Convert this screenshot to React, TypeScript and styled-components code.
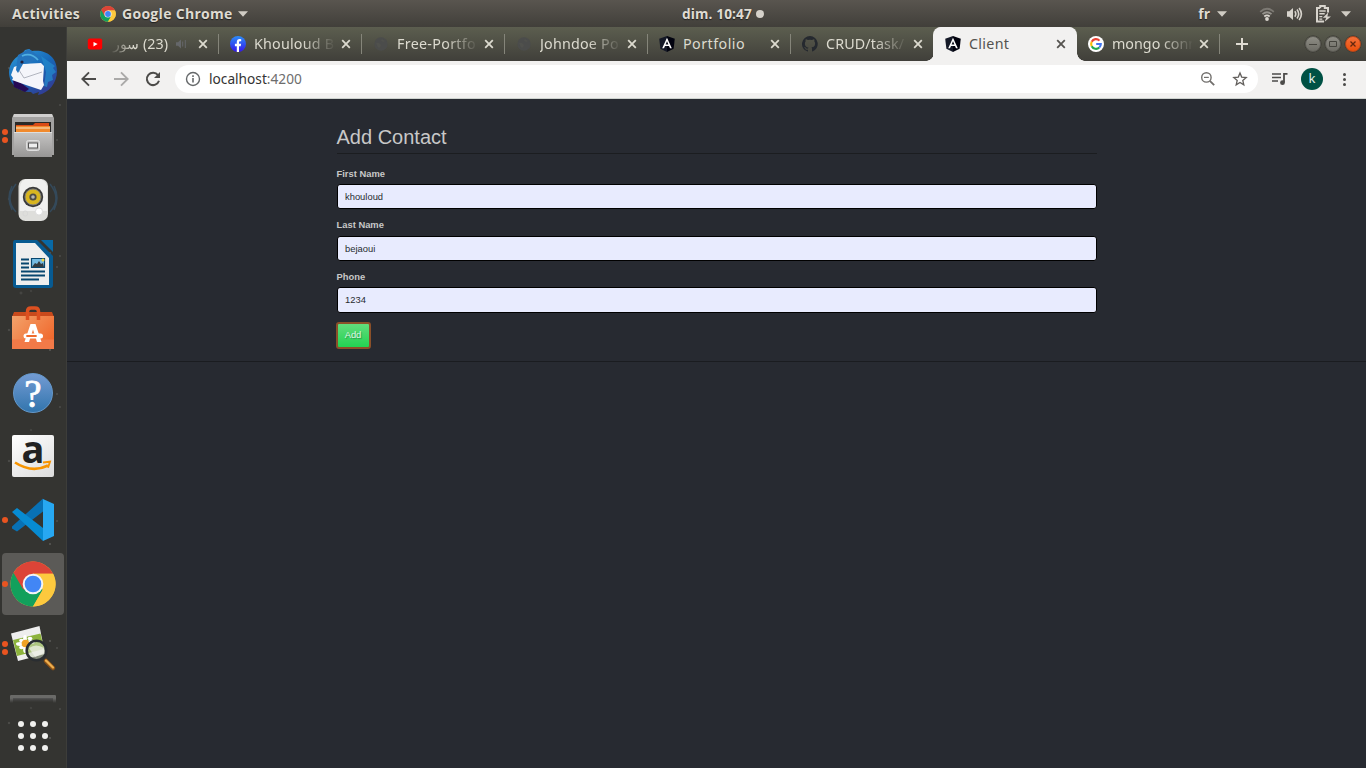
import React from "react";
import styled, { createGlobalStyle, css } from "styled-components";

const GlobalStyle = createGlobalStyle`
  * { box-sizing: border-box; }
  html, body { margin: 0; padding: 0; overflow: hidden; }
  body { width: 1366px; height: 768px; background: #272a31; font-family: "Noto Sans", "Open Sans", sans-serif; }
  svg { display: block; flex: none; }
`;

const Desktop = styled.div`
  width: 1366px;
  height: 768px;
  display: flex;
  flex-direction: column;
  overflow: hidden;
`;

/* ---------- top panel ---------- */

const TopPanel = styled.header`
  height: 27px;
  flex: none;
  display: grid;
  grid-template-columns: 682px auto 1fr;
  align-items: center;
  background: linear-gradient(#59554f, #413f3a);
  color: #dfdbd2;
  font-weight: 700;
  font-family: "Open Sans", sans-serif;
  font-size: 14px;
  line-height: 26px;
  text-shadow: 0 1px 1px rgba(0, 0, 0, 0.55);
`;

const PanelGroup = styled.div<{ $end?: boolean }>`
  display: flex;
  align-items: center;
  ${(p) => (p.$end ? css`justify-content: flex-end; padding-right: 15px;` : css`padding-left: 12px;`)}
`;

const PanelText = styled.span<{ $width?: number; $spacing?: number }>`
  white-space: nowrap;
  letter-spacing: ${(p) => p.$spacing ?? 0}px;
  ${(p) => p.$width && css`width: ${p.$width}px;`}
`;

const PanelIcon = styled.span<{ $gap: number }>`
  display: block;
  margin-left: ${(p) => p.$gap}px;
`;

const Clock = styled.div`
  display: flex;
  align-items: center;
  gap: 4px;
  width: 82px;
  letter-spacing: 0.1px;
  white-space: nowrap;
  font-size: 13.7px;
`;

const ClockDot = styled.i`
  width: 8px;
  height: 8px;
  flex: none;
  border-radius: 50%;
  background: #d5d1ca;
`;

/* ---------- dock ---------- */

const Workspace = styled.div`
  flex: 1;
  min-height: 0;
  display: flex;
`;

const Dock = styled.nav`
  width: 67px;
  flex: none;
  display: flex;
  flex-direction: column;
  gap: 2px;
  padding: 14px 0 0 2px;
  background-color: #343431;
  background-image:
    radial-gradient(circle at 50px 32px, #50504d 0 0.7px, transparent 1.4px),
    radial-gradient(circle at 9px 41px, #4a4a47 0 0.9px, transparent 1.6px),
    radial-gradient(circle at 60px 78px, #484845 0 0.6px, transparent 1.4px),
    radial-gradient(circle at 21px 93px, #454542 0 1px, transparent 1.8px),
    radial-gradient(circle at 57px 113px, #4b4b48 0 0.6px, transparent 1.2px),
    radial-gradient(circle at 31px 125px, #42423f 0 0.8px, transparent 1.6px);
  background-size: 67px 97px, 67px 131px, 67px 151px, 67px 173px, 67px 127px, 67px 139px;
  box-shadow: inset -1px 0 #3d3d3a;
`;

const DockItem = styled.div<{ $active?: boolean }>`
  width: 62px;
  height: 62px;
  flex: none;
  position: relative;
  display: flex;
  align-items: center;
  justify-content: center;
  border-radius: 4px;
  background: ${(p) => (p.$active ? "#5b5a57" : "transparent")};
`;

const RunningDots = styled.div`
  position: absolute;
  left: 0;
  top: 0;
  bottom: 0;
  display: flex;
  flex-direction: column;
  justify-content: center;
  gap: 2.5px;
`;

const RunningDot = styled.i`
  width: 6px;
  height: 6px;
  border-radius: 50%;
  background: #e95420;
`;

const DriveEdge = styled.div`
  width: 46px;
  height: 8px;
  flex: none;
  margin: 14px 0 0 8px;
  border: 3px solid #6a6a68;
  border-bottom: 0;
  border-radius: 1px 1px 0 0;
  background: linear-gradient(#555, #3a3a38);
  mask-image: linear-gradient(#000 40%, transparent);
`;

const AppGrid = styled.div`
  display: grid;
  grid-template-columns: repeat(3, 6px);
  gap: 6px;
  justify-content: center;
  width: 62px;
  margin-top: 16px;
`;

const AppDot = styled.i`
  width: 6px;
  height: 6px;
  border-radius: 50%;
  background: #f0f0ee;
`;

/* ---------- browser ---------- */

const Browser = styled.main`
  flex: 1;
  min-width: 0;
  display: flex;
  flex-direction: column;
`;

const TabStrip = styled.div`
  height: 34px;
  flex: none;
  display: flex;
  align-items: stretch;
  padding-left: 9px;
  background: linear-gradient(#5c5e4f, #403f3a);
`;

const TabBox = styled.div<{ $active?: boolean }>`
  width: 143px;
  flex: none;
  position: relative;
  display: flex;
  align-items: center;
  padding: 0 10px 0 11px;
  color: ${(p) => (p.$active ? "#55534f" : "#dcdacf")};
  ${(p) =>
    p.$active &&
    css`
      background: #f2f1f0;
      border-radius: 8px 8px 0 0;
      box-shadow: -1px 0 #f2f1f0;
      &::before,
      &::after {
        content: "";
        position: absolute;
        bottom: 0;
        width: 8px;
        height: 8px;
      }
      &::before { left: -8px; background: radial-gradient(circle at 0 0, transparent 7.5px, #f2f1f0 8px); }
      &::after { right: -8px; background: radial-gradient(circle at 100% 0, transparent 7.5px, #f2f1f0 8px); }
    `}
`;

const TabDivider = styled.i`
  position: absolute;
  right: 0;
  top: 7px;
  width: 1px;
  height: 20px;
  background: #85857a;
`;

const TabTitle = styled.span<{ $rtl?: boolean; $width: number; $spacing: number; $fade?: boolean }>`
  width: ${(p) => p.$width}px;
  flex: none;
  margin-left: 8px;
  overflow: hidden;
  white-space: nowrap;
  font-size: 14.3px;
  line-height: 20px;
  letter-spacing: ${(p) => p.$spacing}px;
  direction: ${(p) => (p.$rtl ? "rtl" : "ltr")};
  ${(p) =>
    p.$fade &&
    css`mask-image: linear-gradient(to ${p.$rtl ? "left" : "right"}, #000 60%, transparent 102%);`}
`;

const TabClose = styled.span`
  margin-left: auto;
  margin-right: 1px;
`;

const NewTab = styled.span`
  display: flex;
  align-items: center;
  margin-left: 16px;
`;

const WindowButtons = styled.div`
  display: flex;
  align-items: center;
  gap: 4px;
  margin-left: auto;
  padding-right: 5px;
`;

const WindowButton = styled.span<{ $close?: boolean }>`
  width: 16px;
  height: 16px;
  border-radius: 50%;
  border: 1px solid ${(p) => (p.$close ? "#b5461a" : "#5c5b55")};
  background: ${(p) => (p.$close ? "linear-gradient(#f4703a, #ea500c)" : "linear-gradient(#8e8d85, #6e6d66)")};
  box-shadow: 0 0 0 0.5px #36352f;
`;

const Toolbar = styled.div`
  height: 38px;
  flex: none;
  display: flex;
  align-items: center;
  padding: 0 13px 2px 14px;
  background: #f2f1f0;
  border-bottom: 1px solid #ced3cf;
`;

const NavButtons = styled.div`
  display: flex;
  gap: 16px;
  width: 94px;
`;

const AddressBar = styled.div`
  width: 1083px;
  flex: none;
  height: 28px;
  display: flex;
  align-items: center;
  padding: 0 10px;
  border-radius: 14px;
  background: #fff;
`;

const Url = styled.span`
  flex: 1;
  margin-left: 8px;
  font-size: 13.7px;
  line-height: 20px;
  color: #333;
`;

const Port = styled.span`
  color: #6d6d6d;
`;

const BarIcons = styled.div`
  display: flex;
  gap: 16px;
`;

const MenuIcons = styled.div`
  display: flex;
  align-items: center;
  margin-left: 13px;
`;

const Avatar = styled.span`
  width: 22px;
  height: 22px;
  flex: none;
  margin: 0 13px;
  border-radius: 50%;
  background: #005144;
  color: #e3efec;
  font-size: 13px;
  line-height: 21px;
  text-align: center;
`;

/* ---------- page ---------- */

const Page = styled.section`
  flex: 1;
  background: #272a31;
  font-family: "Liberation Sans", Arial, sans-serif;
  color: #c8c8c8;
`;

const FormSection = styled.div`
  height: 263px;
  border-bottom: 1px solid #1a1c20;
`;

const Form = styled.form`
  width: 760px;
  margin: 0 auto;
  padding-top: 24px;
`;

const Legend = styled.h1`
  height: 31px;
  margin: 0 0 12.8px;
  border-bottom: 1px solid #1b1d20;
  font-size: 20px;
  font-weight: 400;
  line-height: 29px;
`;

const Field = styled.label`
  display: block;
  height: 51.6px;
`;

const FieldName = styled.span`
  display: block;
  height: 17.2px;
  font-size: 9.4px;
  font-weight: 700;
  line-height: 13px;
`;

const FieldInput = styled.input`
  display: block;
  width: 100%;
  height: 25.4px;
  padding: 0 7.5px 0.5px;
  border: 1px solid #000;
  border-radius: 3px;
  outline: 0;
  background: #e8ebfe;
  color: #272b30;
  font-family: inherit;
  font-size: 9.4px;
`;

const AddButton = styled.button`
  display: block;
  width: 35px;
  height: 27px;
  margin: 0 0 0 -1px;
  padding: 0 0 2px;
  border: 2px solid #8b5029;
  border-radius: 3px;
  background: linear-gradient(#62dc7c, #22d352);
  color: #dff7e5;
  font-family: inherit;
  font-size: 9.4px;
  text-shadow: 1px 1px 1px rgba(0, 0, 0, 0.3);
`;

/* ---------- drawings ---------- */

const Chrome = ({ size }: { size: number }) => (
  <svg width={size} height={size} viewBox="0 0 48 48">
    <circle cx="24" cy="24" r="23.5" fill="#fdc93e" />
    <path d="M24 24 3.6 12.3A23.5 23.5 0 0 0 24 47.5L34.5 29.5z" fill="#12a05c" />
    <path d="M3.6 12.3A23.5 23.5 0 0 1 45.1 13.4L24 13.4 14 30z" fill="#dc4437" />
    <path d="M45.1 13.4H24v10.6l10.2 5.9L24 47.5A23.5 23.5 0 0 0 45.1 13.4z" fill="#fdc93e" />
    <circle cx="24" cy="24" r="10.8" fill="#f4f4f4" />
    <circle cx="24" cy="24" r="8.7" fill="#4286f5" />
  </svg>
);

const Caret = () => (
  <svg width="10" height="6" viewBox="0 0 10 6">
    <path d="M0 .3h10L5 5.7z" fill="#d0ccc4" />
  </svg>
);

const Wifi = () => (
  <svg width="16" height="16" viewBox="0 0 16 16" fill="none" strokeWidth="1.8">
    <path d="M1.2 5.8Q8 -.2 14.8 5.8" stroke="#7c7973" />
    <path d="M3.5 8.2Q8 4.2 12.5 8.2" stroke="#96938d" />
    <path d="M5.3 10.5Q8 8.2 10.7 10.5" stroke="#dad6cf" />
    <circle cx="8" cy="13" r="1.9" fill="#dad6cf" />
  </svg>
);

const Volume = () => (
  <svg width="17" height="16" viewBox="0 0 17 16" fill="none" stroke="#d8d4cd" strokeWidth="1.6">
    <path d="M1 5.3h2.3L7 2v12l-3.7-3.3H1z" fill="#d8d4cd" stroke="none" />
    <path d="M8.8 5.3q2 2.7 0 5.4M11 3.5q3.4 4.5 0 9M13.1 1.9q4.6 6.1 0 12.2" />
  </svg>
);

const Battery = () => (
  <svg width="16" height="18" viewBox="0 0 16 18">
    <path d="M4.2 3V1h4.6v2H12v4.5M8 16.5H1V3h3.2" fill="none" stroke="#d8d4cd" strokeWidth="2" />
    <path d="M3.3 6h6.4M3.3 8.8h5.4M3.3 11.6h3M3.3 14.1h3" stroke="#d8d4cd" strokeWidth="1.4" />
    <path d="M12.3 7.4 6.8 12.7h3.4l-1.6 4 6.4-5.2h-3.6z" fill="#d8d4cd" />
  </svg>
);

const Cross = ({ color }: { color: string }) => (
  <svg width="10" height="10" viewBox="0 0 10 10">
    <path d="m1.2 1.2 7.6 7.6m0-7.6-7.6 7.6" stroke={color} strokeWidth="1.8" />
  </svg>
);

const YouTube = () => (
  <svg width="16" height="16" viewBox="0 0 16 16">
    <rect x=".8" y="2.5" width="14.4" height="11" rx="2" fill="#f00" />
    <path d="m6.5 5.9 4.1 2.2-4.1 2.3z" fill="#fff" />
  </svg>
);

const Facebook = () => (
  <svg width="16" height="16" viewBox="0 0 16 16">
    <defs>
      <linearGradient id="fb" x1="0" y1="0" x2="0" y2="1">
        <stop offset="0" stopColor="#2c8df8" />
        <stop offset="1" stopColor="#3516e8" />
      </linearGradient>
    </defs>
    <circle cx="8" cy="8" r="8" fill="url(#fb)" />
    <path d="M6.8 16v-5.8H4.9V7.8h1.9V6.1c0-2 1.1-3 2.8-3l1.6.1v2h-.9c-1 0-1.3.5-1.3 1.2v1.4h2.1l-.4 2.4H9V16z" fill="#fff" />
  </svg>
);

const Globe = () => (
  <svg width="16" height="16" viewBox="0 0 16 16">
    <circle cx="8" cy="8" r="6.7" fill="#4b4c4b" />
    <path d="M3 7q3-1 4 1l1 1-1 2.5-2 0zM9 3l-1 1.5 2 1.5 2-1z" fill="#50514d" />
  </svg>
);

const Angular = () => (
  <svg width="16" height="16" viewBox="0 0 16 16">
    <path d="M8 0 .2 2.7l1.2 10L8 16z" fill="#151927" />
    <path d="m8 0 7.8 2.7-1.2 10L8 16z" fill="#02030f" />
    <path d="m8 1.8-4.8 10.5H5l1-2.4h4l1 2.4h1.8zm0 3.5 1.4 3.2H6.6z" fill="#fff" />
  </svg>
);

const GitHub = () => (
  <svg width="16" height="16" viewBox="0 0 16 16">
    <path
      fill="#25292f"
      d="M8 0a8 8 0 0 0-2.5 15.6c.4.1.5-.2.5-.4v-1.5c-2 .4-2.5-.5-2.7-1-.1-.2-.5-1-.8-1.1-.3-.2-.7-.6 0-.6s1.1.6 1.2.8c.7 1.2 1.9.9 2.3.7.1-.5.3-.9.5-1.1-1.8-.2-3.6-.9-3.6-4 0-.9.3-1.6.8-2.1-.1-.2-.4-1 .1-2.100 0 0 .7-.2 2.200.8a7.600 7.600 0 0 1 4 0c1.500-1 2.200-.8 2.200-.8.4 1.100.2 1.900.1 2.100.5.6.8 1.300.8 2.100 0 3.100-1.900 3.700-3.600 4 .3.2.5.7.5 1.500v2.200c0 .2.1.5.5.4A8 8 0 0 0 8 0z"
    />
  </svg>
);

const Google = () => (
  <svg width="16" height="16" viewBox="0 0 16 16">
    <circle cx="8" cy="8" r="8" fill="#fff" />
    <g fill="none" strokeWidth="2.1">
      <path d="M11.5 4.6A4.8 4.8 0 0 0 3.7 5.8" stroke="#ea4335" />
      <path d="M3.7 5.8a4.8 4.8 0 0 0 0 4.4" stroke="#fbbc05" />
      <path d="M3.7 10.2a4.8 4.8 0 0 0 7.6 1.3" stroke="#22a84d" />
      <path d="M11.3 11.5A4.8 4.8 0 0 0 12.8 8H8.2" stroke="#4276f0" />
    </g>
  </svg>
);

const Muted = () => (
  <svg width="11" height="10" viewBox="0 0 11 10">
    <path d="M0 3.2h2L5 .5v9L2 6.800H0z" fill="#65676a" />
    <path d="M6.7 2.5v5M9.3 1v8" stroke="#65676a" strokeWidth="1" />
  </svg>
);

const Thunderbird = () => (
  <svg width="50" height="52" viewBox="0 -2 50 52">
    <defs>
      <linearGradient id="tb" x1=".1" y1="0" x2=".8" y2="1">
        <stop offset="0" stopColor="#2f9ad8" />
        <stop offset=".5" stopColor="#1768b8" />
        <stop offset="1" stopColor="#343890" />
      </linearGradient>
    </defs>
    <path d="M17 2 21 1l3 2c14-2 25 6 25 20 0 12-8 22-19 24l1-3-6 2-2-2C10 44 1 36 1 24 1 15 8 8 14 6z" fill="url(#tb)" />
    <path d="M5 32 6 39l11 5 4-3-8-6z" fill="#250a55" />
    <path d="M6 19 14 16l19-1 3 3-1 15 1 4-3 5L18 37 4 32 5 30 3 27z" fill="#f4f5fa" />
    <path d="m9 19 7 11 18-6" fill="none" stroke="#a9adb8" strokeWidth=".9" />
    <path d="M10 7 21 1l11 8-10 6-7 1-5 9-2-3z" fill="#2474bd" />
    <path d="m33 8 14 10-2 2 3 4-4 3 1 5-5 2-1 5-3-1 2-14z" fill="#248dcf" opacity=".7" />
    <path d="M14 8q9-4 16 4" stroke="#50afe1" strokeWidth="1.8" fill="none" />
    <circle cx="14" cy="14" r="1.6" fill="#211e38" />
  </svg>
);

const Files = () => (
  <svg width="42" height="44" viewBox="0 0 42 44">
    <defs>
      <linearGradient id="cabinet" x1="0" y1="0" x2="0" y2="1">
        <stop offset="0" stopColor="#c6c5c4" />
        <stop offset="1" stopColor="#979695" />
      </linearGradient>
    </defs>
    <path d="M2 0h38l2 4v37H0V4z" fill="#a3a2a1" />
    <path d="M2 0h38l1 3H1z" fill="#d0cfce" />
    <path d="M3 8h36v10H3z" fill="#2b2926" />
    <path d="M4 11h17l2-2h14v8H4z" fill="#d94b16" />
    <path d="M4 12h34v6H4z" fill="#f18a2d" />
    <path d="M4 14h34" stroke="#f8e5c9" strokeWidth="1.2" />
    <path d="M2 18h38v25H2z" fill="url(#cabinet)" />
    <path d="M2 18.5h38" stroke="#dededd" />
    <rect x="14.5" y="26.5" width="13" height="10" rx="2" fill="#c4c3c2" stroke="#dfdfdf" />
    <rect x="16.5" y="29" width="9" height="5" fill="#eee" stroke="#555" />
  </svg>
);

const Speaker = () => (
  <svg width="50" height="46" viewBox="0 0 50 46">
    <path d="M8 7Q-4 22 8 35M4 9Q-2 21 4 33M42 7Q54 22 42 35M46 9Q52 21 46 33" fill="none" stroke="#34495a" strokeWidth="1.5" />
    <rect x="10.5" y="2" width="29.5" height="42" rx="7" fill="#dededb" />
    <path d="M12 10q1-8 8-8h10q8 0 9 8v24H12z" fill="#f0f0ef" />
    <circle cx="25" cy="20" r="10.2" fill="#3a3a3a" />
    <circle cx="25" cy="20" r="8" fill="#d8b520" stroke="#7f7f7c" />
    <circle cx="25" cy="20" r="3.6" fill="#4c4a45" />
    <circle cx="25" cy="20" r="1.8" fill="#b6b5b0" />
    <circle cx="31" cy="34.5" r="3.6" fill="#fff" stroke="#ddd" />
    <rect x="15" y="34" width="4.5" height="5" rx="2" fill="none" stroke="#d8d8d7" />
  </svg>
);

const Writer = () => (
  <svg width="42" height="50" viewBox="0 0 42 50">
    <path d="M3 1h22l16 16v29q0 3-3 3H4q-3 0-3-3V4q0-3 2-3z" fill="#075a91" />
    <path d="M26 0h16v16z" fill="#343431" />
    <path d="M29 1h12v12z" fill="#0869a6" />
    <path d="M4 4h19l14 15v27H4z" fill="#eee" />
    <path d="M9 20.5h8M9 24.5h8M9 28.5h8M9 32.5h24M9 36.5h24M9 40.5h18" stroke="#07466f" strokeWidth="1.9" />
    <path d="M19.5 19.5h13v9h-13z" fill="#75bbe2" stroke="#07466f" strokeWidth="1.2" />
    <path d="m20 28 3-4 2 1 2-3 2 3 2-1 1 4z" fill="#333b40" />
    <circle cx="31" cy="21" r="1.5" fill="#f2d542" />
  </svg>
);

const Software = () => (
  <svg width="44" height="46" viewBox="0 0 44 46">
    <defs>
      <linearGradient id="bag" x1="0" y1="0" x2="1" y2=".7">
        <stop offset="0" stopColor="#f3a26b" />
        <stop offset="1" stopColor="#f0682c" />
      </linearGradient>
    </defs>
    <path d="M3 7h38l2 5H1z" fill="#c94a1c" />
    <path d="M1 11h42v33H1z" fill="url(#bag)" />
    <path d="M1 34.5h42V44H1z" fill="#f27a48" />
    <path d="M16.5 15V6.5q0-3.5 3.5-3.5h4q3.5 0 3.5 3.5V15" fill="none" stroke="#dd5020" strokeWidth="3.5" />
    <path d="M19.5 19h5L30.5 37H26L22 24.5 18 37h-4.5z" fill="#fff" />
    <path d="M15 31h14.5" stroke="#fff" strokeWidth="5" strokeLinecap="round" />
    <path d="M16 31h9" stroke="#ef6b2c" strokeWidth="1.8" strokeLinecap="round" />
  </svg>
);

const HelpBall = styled.span`
  width: 40px;
  height: 40px;
  margin-top: 2px;
  border: 1px solid #6599cc;
  border-radius: 50%;
  background: linear-gradient(#739bd3, #3275ad);
  color: #fff;
  font: 400 39px/39px "Liberation Serif", serif;
  -webkit-text-stroke: 0.8px #fff;
  text-align: center;
`;

const AmazonTile = styled.span`
  width: 42px;
  height: 42px;
  display: flex;
  flex-direction: column;
  align-items: center;
  border-radius: 2px;
  background: linear-gradient(145deg, #fff, #dcdcdc);
  color: #222;
  font: 700 38px/34px "Open Sans", sans-serif;
`;

const AmazonLetter = styled.span`
  height: 28px;
  margin-top: -4px;
`;

const Smile = () => (
  <svg width="38" height="12" viewBox="0 0 38 12">
    <path d="M1 3.5q17 11 33 3" fill="none" stroke="#f79400" strokeWidth="2.6" />
    <path d="m29 3.5 7-.8-2 6" fill="none" stroke="#f79400" strokeWidth="1.9" />
  </svg>
);

const Code = () => (
  <svg width="44" height="44" viewBox="0 0 44 44">
    <path d="m1 28.5 31-28V13.5L6 33.5l-5-3z" fill="#0871b5" />
    <path d="m1 14 5-4 26 20v13z" fill="#078bd2" />
    <path d="M32 1 43 6v32l-11 5z" fill="#27a8f2" />
  </svg>
);

const ImageViewer = () => (
  <svg width="48" height="48" viewBox="0 0 48 48">
    <g transform="translate(-1 0)">
      <path d="M3 9.500 31.500 2 37 30 10 37z" fill="#eee" />
      <path d="M5 16 32.500 9.500 36 25 9 32z" fill="#8db33c" />
      <g fill="#fff">
        <ellipse cx="17" cy="15" rx="1.900" ry="4" />
        <ellipse cx="17" cy="25" rx="1.900" ry="4" />
        <ellipse cx="12" cy="20" rx="4" ry="1.900" />
        <ellipse cx="23" cy="18" rx="4" ry="1.900" />
        <ellipse cx="13.500" cy="16.500" rx="2.400" ry="1.800" />
        <ellipse cx="13.500" cy="23.500" rx="2.400" ry="1.800" />
        <ellipse cx="22" cy="14.500" rx="2.400" ry="1.800" />
      </g>
      <circle cx="17.500" cy="19.500" r="3.800" fill="#efa224" />
    </g>
    <path d="m37 37 7 7" stroke="#8d5216" strokeWidth="4.500" strokeLinecap="round" />
    <path d="m37 36.500 7 7" stroke="#edaf4e" strokeWidth="2.300" strokeLinecap="round" />
    <circle cx="27.500" cy="26.500" r="9.800" fill="#c9d3b8" fillOpacity=".55" stroke="#292d31" strokeWidth="2.600" />
    <path d="M20 24q7-5 15 0v5l-9 4z" fill="#f2f2ee" opacity=".7" />
  </svg>
);

const Back = ({ flip }: { flip?: boolean }) => (
  <svg width="16" height="16" viewBox="0 0 16 16">
    <path
      d={flip ? "M1 8h13M8 1.3 14.7 8 8 14.7" : "M15 8H2M8 1.3 1.3 8 8 14.7"}
      fill="none"
      stroke={flip ? "#aaa9a8" : "#4c4b49"}
      strokeWidth="1.9"
    />
  </svg>
);

const Reload = () => (
  <svg width="16" height="16" viewBox="0 0 16 16">
    <path d="M13 4.1A6.2 6.2 0 1 0 14 9.8" fill="none" stroke="#4c4b49" strokeWidth="2" />
    <path d="M15 1v6H9z" fill="#4c4b49" />
  </svg>
);

const Info = () => (
  <svg width="16" height="16" viewBox="0 0 16 16">
    <circle cx="8" cy="8" r="6.5" fill="none" stroke="#65686a" strokeWidth="1.4" />
    <path d="M8 7v4.6M8 4.3V6" stroke="#65686a" strokeWidth="1.6" />
  </svg>
);

const ZoomOut = () => (
  <svg width="16" height="16" viewBox="0 0 16 16" fill="none" stroke="#716f6c">
    <circle cx="6.4" cy="6.4" r="4.7" strokeWidth="1.4" />
    <path d="M4 6.4h4.8" strokeWidth="1.2" />
    <path d="m9.8 9.8 4.4 4.4" strokeWidth="1.8" />
  </svg>
);

const Star = () => (
  <svg width="16" height="16" viewBox="0 0 16 16">
    <path d="m8 2 1.7 4.1 4.5.4-3.4 2.9 1 4.4L8 11.5l-3.8 2.3 1-4.4-3.4-2.9 4.5-.4z" fill="none" stroke="#625f5c" strokeWidth="1.3" />
  </svg>
);

const Playlist = () => (
  <svg width="17" height="14" viewBox="0 0 17 14">
    <path d="M1 2h9M1 5.5h9M1 9h6" stroke="#4c4b49" strokeWidth="1.7" />
    <path d="M13 10.5V1.8h3.5" fill="none" stroke="#4c4b49" strokeWidth="1.8" />
    <circle cx="11.5" cy="10.7" r="2.4" fill="#4c4b49" />
  </svg>
);

const Kebab = () => (
  <svg width="16" height="16" viewBox="0 0 16 16" fill="#4c4b49">
    <circle cx="8.5" cy="3.4" r="1.5" />
    <circle cx="8.5" cy="8.4" r="1.5" />
    <circle cx="8.5" cy="13.4" r="1.5" />
  </svg>
);

/* ---------- composition ---------- */

type TabData = {
  title: string;
  icon: React.ReactNode;
  spacing?: number;
  active?: boolean;
  rtl?: boolean;
  fade?: boolean;
  divider?: boolean;
};

const tabs: TabData[] = [
  { title: "(23) سور", icon: <YouTube />, rtl: true, fade: true, divider: true },
  { title: "Khouloud B", icon: <Facebook />, fade: true, divider: true, spacing: 0.2 },
  { title: "Free-Portfo", icon: <Globe />, fade: true, divider: true, spacing: 0.3 },
  { title: "Johndoe Po", icon: <Globe />, fade: true, divider: true, spacing: 0.2 },
  { title: "Portfolio", icon: <Angular />, divider: true, spacing: 0.45 },
  { title: "CRUD/task/", icon: <GitHub />, fade: true, spacing: 0.1 },
  { title: "Client", icon: <Angular />, active: true, spacing: 0.3 },
  { title: "mongo conn", icon: <Google />, fade: true, divider: true, spacing: 0 },
];

const dockApps = [
  { icon: <Thunderbird />, running: 0 },
  { icon: <Files />, running: 2 },
  { icon: <Speaker />, running: 0 },
  { icon: <Writer />, running: 0 },
  { icon: <Software />, running: 0 },
  { icon: <HelpBall>?</HelpBall>, running: 0 },
  { icon: <AmazonTile><AmazonLetter>a</AmazonLetter><Smile /></AmazonTile>, running: 0 },
  { icon: <Code />, running: 1 },
  { icon: <Chrome size={46} />, running: 1, active: true },
  { icon: <ImageViewer />, running: 2 },
];

const fields = [
  { name: "First Name", value: "khouloud" },
  { name: "Last Name", value: "bejaoui" },
  { name: "Phone", value: "1234" },
];

export default function App() {
  return (
    <Desktop>
      <GlobalStyle />
      <TopPanel>
        <PanelGroup>
          <PanelText $width={88} $spacing={0.3}>Activities</PanelText>
          <Chrome size={16} />
          <PanelIcon $gap={6} />
          <PanelText $width={116} $spacing={0.3}>Google Chrome</PanelText>
          <Caret />
        </PanelGroup>
        <Clock>dim. 10:47<ClockDot /></Clock>
        <PanelGroup $end>
          <PanelText>fr</PanelText>
          <PanelIcon $gap={7}><Caret /></PanelIcon>
          <PanelIcon $gap={32}><Wifi /></PanelIcon>
          <PanelIcon $gap={11}><Volume /></PanelIcon>
          <PanelIcon $gap={13}><Battery /></PanelIcon>
          <PanelIcon $gap={9}><Caret /></PanelIcon>
        </PanelGroup>
      </TopPanel>
      <Workspace>
        <Dock>
          {dockApps.map((app, i) => (
            <DockItem key={i} $active={app.active}>
              <RunningDots>
                {Array.from({ length: app.running }, (_, n) => <RunningDot key={n} />)}
              </RunningDots>
              {app.icon}
            </DockItem>
          ))}
          <DriveEdge />
          <AppGrid>
            {Array.from({ length: 9 }, (_, n) => <AppDot key={n} />)}
          </AppGrid>
        </Dock>
        <Browser>
          <TabStrip>
            {tabs.map((tab, i) => (
              <TabBox key={i} $active={tab.active}>
                {tab.icon}
                <TabTitle $rtl={tab.rtl} $fade={tab.fade} $width={tab.rtl ? 57 : 80} $spacing={tab.spacing ?? 0}>
                  {tab.title}
                </TabTitle>
                {tab.rtl && <PanelIcon $gap={8}><Muted /></PanelIcon>}
                <TabClose><Cross color={tab.active ? "#55534f" : "#dcdacf"} /></TabClose>
                {tab.divider && <TabDivider />}
              </TabBox>
            ))}
            <NewTab>
              <svg width="12" height="12" viewBox="0 0 12 12">
                <path d="M6 0v12M0 6h12" stroke="#dfdbd2" strokeWidth="2" />
              </svg>
            </NewTab>
            <WindowButtons>
              <WindowButton>
                <svg width="14" height="14" viewBox="0 0 14 14"><path d="M3 7.5h8" stroke="#45443e" /></svg>
              </WindowButton>
              <WindowButton>
                <svg width="14" height="14" viewBox="0 0 14 14"><path d="M3.5 4.5h7v5h-7z" fill="none" stroke="#45443e" /></svg>
              </WindowButton>
              <WindowButton $close>
                <svg width="14" height="14" viewBox="0 0 14 14"><path d="m4.5 4.5 5 5m0-5-5 5" stroke="#63270e" strokeWidth="1.3" /></svg>
              </WindowButton>
            </WindowButtons>
          </TabStrip>
          <Toolbar>
            <NavButtons>
              <Back />
              <Back flip />
              <Reload />
            </NavButtons>
            <AddressBar>
              <Info />
              <Url>localhost<Port>:4200</Port></Url>
              <BarIcons><ZoomOut /><Star /></BarIcons>
            </AddressBar>
            <MenuIcons>
              <Playlist />
              <Avatar>k</Avatar>
              <Kebab />
            </MenuIcons>
          </Toolbar>
          <Page>
            <FormSection>
              <Form>
                <Legend>Add Contact</Legend>
                {fields.map((field) => (
                  <Field key={field.name}>
                    <FieldName>{field.name}</FieldName>
                    <FieldInput defaultValue={field.value} />
                  </Field>
                ))}
                <AddButton type="button">Add</AddButton>
              </Form>
            </FormSection>
          </Page>
        </Browser>
      </Workspace>
    </Desktop>
  );
}
